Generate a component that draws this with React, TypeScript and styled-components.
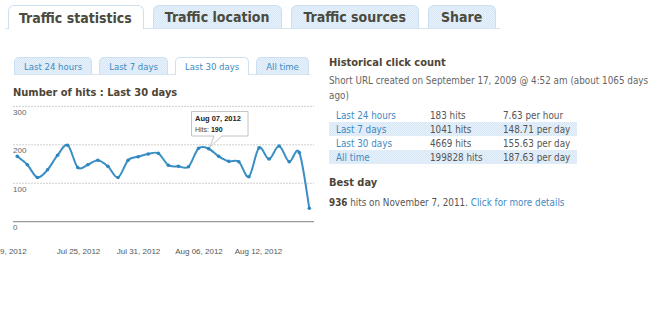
import React from "react";
import styled, { createGlobalStyle } from "styled-components";

const GlobalStyle = createGlobalStyle`
  body {
    margin: 0;
    background: #fff;
    font-family: "DejaVu Sans Condensed", "DejaVu Sans", sans-serif;
  }
`;

const dotted = `
  background-color: #dfedf9;
  background-image: repeating-conic-gradient(#d8e8f6 0 25%, #e5f0fa 0 50%);
  background-size: 2px 2px;
`;

const Page = styled.div`
  width: 650px;
  height: 322px;
  overflow: hidden;
`;

const TabBar = styled.div`
  display: flex;
  align-items: flex-end;
  gap: 9px;
  margin: 0 150px 0 5px;
  padding: 5px 0 0 3px;
  border-bottom: 1px solid #d3e5f3;
`;

const Tab = styled.div<{ $active?: boolean; $pad?: number }>`
  height: 22px;
  padding: 0 ${(p) => p.$pad ?? 12}px 0 ${(p) => (p.$pad ?? 12) - 1}px;
  display: flex;
  align-items: center;
  border: 1px solid #cde0f1;
  border-bottom: none;
  border-radius: 6px 6px 0 0;
  margin-bottom: ${(p) => (p.$active ? "-1px" : "0")};
  font-size: 14px;
  font-weight: bold;
  color: #4b4a3e;
  ${(p) => (p.$active ? "background: #fff; height: 23px;" : dotted)}
`;

const Content = styled.div`
  display: flex;
`;

const Left = styled.div`
  width: 320px;
  padding-top: 28px;
`;

const SubTabs = styled.div`
  display: flex;
  align-items: flex-end;
  gap: 7px;
  margin-left: 14px;
  width: 296px;
  border-bottom: 1px solid #d3e5f3;
`;

const SubTab = styled.div<{ $active?: boolean }>`
  height: 16px;
  padding: 0 9px;
  display: flex;
  align-items: center;
  border: 1px solid #cde0f1;
  border-bottom: none;
  border-radius: 5px 5px 0 0;
  margin-bottom: ${(p) => (p.$active ? "-1px" : "0")};
  font-size: 9.5px;
  color: #3f8ac2;
  ${(p) => (p.$active ? "background: #fff; height: 17px;" : dotted)}
`;

const Heading = styled.div<{ $indent?: number }>`
  font-size: 11px;
  font-weight: bold;
  color: #4d4538;
  margin-left: ${(p) => p.$indent ?? 0}px;
`;

const ChartWrap = styled.div`
  width: 320px;
  height: 160px;
  overflow: hidden;
`;

const Right = styled.div`
  flex: 1;
  padding: 27px 0 0 9px;
`;

const Note = styled.p`
  margin: 4px 0 0;
  font-size: 9.8px;
  line-height: 15px;
  color: #666;
`;

const StatsTable = styled.div`
  margin-top: 5px;
  width: 248px;
  margin-bottom: 12px;
`;

const StatRow = styled.div<{ $shaded?: boolean }>`
  display: grid;
  grid-template-columns: 94px 73px 1fr;
  height: 14px;
  align-items: center;
  padding-left: 7px;
  font-size: 9.8px;
  color: #555;
  ${(p) => (p.$shaded ? dotted : "")}
`;

const Link = styled.span`
  color: #3f8ac2;
`;

const BestLine = styled.div`
  margin-top: 8px;
  font-size: 9.8px;
  color: #555;
  b {
    color: #4d4538;
  }
`;

const values = [
  170, 148, 115, 135, 173, 199, 141, 148, 160, 144, 115, 160, 169, 176, 178,
  147, 144, 143, 191, 190, 170, 157, 156, 117, 192, 163, 197, 156, 180, 35,
];

const xOf = (i: number) => 17.3 + i * 10.07;
const yOf = (v: number) => 122.7 - v * 0.3844;

function smoothPath(pts: [number, number][]) {
  let d = `M${pts[0][0]},${pts[0][1]}`;
  for (let i = 0; i < pts.length - 1; i++) {
    const p0 = pts[i - 1] || pts[i];
    const p1 = pts[i];
    const p2 = pts[i + 1];
    const p3 = pts[i + 2] || p2;
    const c1x = p1[0] + (p2[0] - p0[0]) / 6;
    const c1y = p1[1] + (p2[1] - p0[1]) / 6;
    const c2x = p2[0] - (p3[0] - p1[0]) / 6;
    const c2y = p2[1] - (p3[1] - p1[1]) / 6;
    d += ` C${c1x.toFixed(1)},${c1y.toFixed(1)} ${c2x.toFixed(1)},${c2y.toFixed(1)} ${p2[0].toFixed(1)},${p2[1].toFixed(1)}`;
  }
  return d;
}

const HitsChart = () => {
  const pts = values.map((v, i) => [xOf(i), yOf(v)] as [number, number]);
  const grid = [300, 200, 100];
  // first label is cut by the chart's left edge in the original
  const xLabels = [
    { x: 0, t: "9, 2012", anchor: "start" },
    { x: 78.5, t: "Jul 25, 2012", anchor: "middle" },
    { x: 138.5, t: "Jul 31, 2012", anchor: "middle" },
    { x: 199, t: "Aug 06, 2012", anchor: "middle" },
    { x: 258.5, t: "Aug 12, 2012", anchor: "middle" },
  ];
  return (
    <svg width="320" height="160" style={{ display: "block" }}>
      <g fontFamily="'Liberation Sans', Arial, sans-serif" fontSize="8">
        {grid.map((g) => (
          <g key={g}>
            <line
              x1="13"
              x2="314"
              y1={yOf(g)}
              y2={yOf(g)}
              stroke="#cfcfcf"
              strokeDasharray="2 1"
            />
            <text x="13" y={yOf(g) + 8.5} fill="#666">
              {g}
            </text>
          </g>
        ))}
        <line x1="13" x2="314" y1="122.7" y2="122.7" stroke="#999" strokeWidth="1.3" />
        <text x="13" y="131" fill="#666">0</text>
        {xLabels.map((l) => (
          <text key={l.t} x={l.x} y="155" textAnchor={l.anchor} fill="#555">
            {l.t}
          </text>
        ))}
        <path d={smoothPath(pts)} fill="none" stroke="#3a8fc4" strokeWidth="2" />
        {pts.map((p, i) => (
          <circle key={i} cx={p[0]} cy={p[1]} r="1.8" fill="#2f86bd" />
        ))}
        <path
          d="M191.5,12.5 H248 V37 H222 L210,48 L214,37 H191.5 Z"
          fill="#fff"
          stroke="#c4c4c4"
          strokeWidth="1"
        />
        <text x="195" y="22" fontSize="7.5" fontWeight="bold" fill="#222">
          Aug 07, 2012
        </text>
        <text x="195" y="32.5" fontSize="7" fill="#444">
          Hits: <tspan fontWeight="bold" fill="#222">190</tspan>
        </text>
      </g>
    </svg>
  );
};

const stats = [
  ["Last 24 hours", "183 hits", "7.63 per hour"],
  ["Last 7 days", "1041 hits", "148.71 per day"],
  ["Last 30 days", "4669 hits", "155.63 per day"],
  ["All time", "199828 hits", "187.63 per day"],
];

export default function App() {
  return (
    <Page>
      <GlobalStyle />
      <TabBar>
        <Tab $active $pad={11}>Traffic statistics</Tab>
        <Tab>Traffic location</Tab>
        <Tab>Traffic sources</Tab>
        <Tab $pad={13}>Share</Tab>
      </TabBar>
      <Content>
        <Left>
          <SubTabs>
            <SubTab>Last 24 hours</SubTab>
            <SubTab>Last 7 days</SubTab>
            <SubTab $active>Last 30 days</SubTab>
            <SubTab>All time</SubTab>
          </SubTabs>
          <Heading $indent={13} style={{ marginTop: 11 }}>
            Number of hits : Last 30 days
          </Heading>
          <ChartWrap>
            <HitsChart />
          </ChartWrap>
        </Left>
        <Right>
          <Heading>Historical click count</Heading>
          <Note>
            Short URL created on September 17, 2009 @ 4:52 am (about 1065 days
            ago)
          </Note>
          <StatsTable>
            {stats.map((r, i) => (
              <StatRow key={r[0]} $shaded={i % 2 === 1}>
                <Link>{r[0]}</Link>
                <span>{r[1]}</span>
                <span>{r[2]}</span>
              </StatRow>
            ))}
          </StatsTable>
          <Heading>Best day</Heading>
          <BestLine>
            <b>936</b> hits on November 7, 2011. <Link>Click for more details</Link>
          </BestLine>
        </Right>
      </Content>
    </Page>
  );
}
